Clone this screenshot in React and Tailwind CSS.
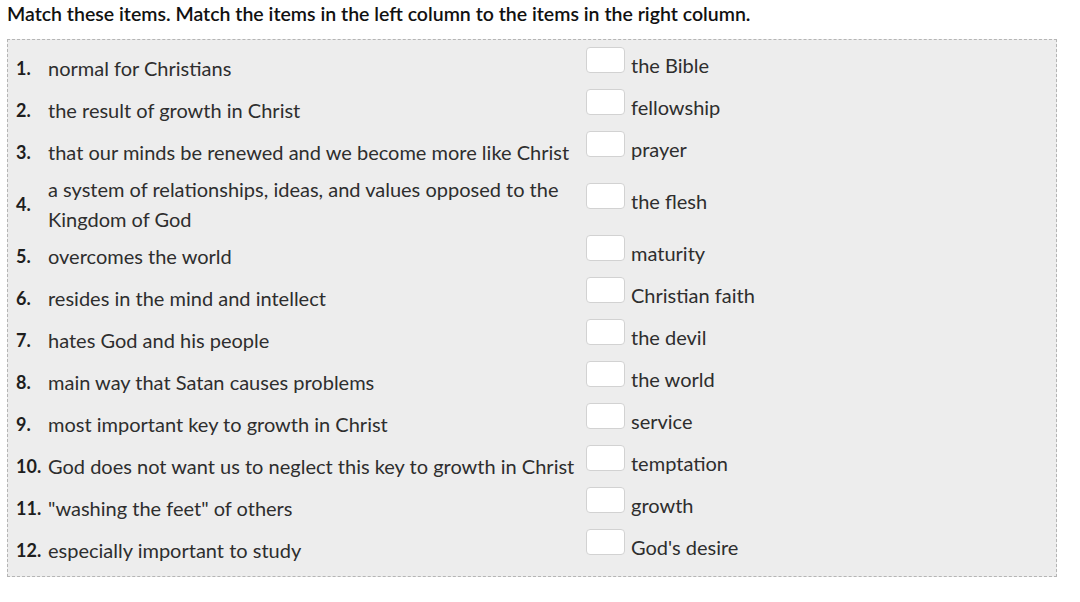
const rows = [
  { n: 1, left: 'normal for Christians', right: 'the Bible' },
  { n: 2, left: 'the result of growth in Christ', right: 'fellowship' },
  { n: 3, left: 'that our minds be renewed and we become more like Christ', right: 'prayer' },
  { n: 4, left: 'a system of relationships, ideas, and values opposed to the Kingdom of God', right: 'the flesh' },
  { n: 5, left: 'overcomes the world', right: 'maturity' },
  { n: 6, left: 'resides in the mind and intellect', right: 'Christian faith' },
  { n: 7, left: 'hates God and his people', right: 'the devil' },
  { n: 8, left: 'main way that Satan causes problems', right: 'the world' },
  { n: 9, left: 'most important key to growth in Christ', right: 'service' },
  { n: 10, left: 'God does not want us to neglect this key to growth in Christ', right: 'temptation' },
  { n: 11, left: '"washing the feet" of others', right: 'growth' },
  { n: 12, left: 'especially important to study', right: "God's desire" },
]

export default function App() {
  return (
    <div className="w-[1080px] h-[602px] bg-white font-['Lato',sans-serif] text-[#2e2e2e]">
      <h1 className="pl-[7px] pt-[2px] text-[19.5px] leading-[23px] font-semibold text-[#111]">
        Match these items. Match the items in the left column to the items in the right column.
      </h1>

      <div className="ml-[7px] mt-[14px] w-[1050px] border border-dashed border-[#b5b5b5] bg-[#ededed] pl-[8px] pt-[7px] pb-[5px]">
        {rows.map((r) => (
          <div key={r.n} className="flex items-center">
            <div className="w-[32px] shrink-0 text-[18px] font-bold text-[#1e1e1e]">{r.n}.</div>
            <div className="w-[532px] shrink-0 py-[1px] text-[20px] leading-[30px]">{r.left}</div>
            <div className="ml-[6px] h-[42px] pb-[14px] text-[20px] leading-[28px]">
              <span className="inline-block mr-[6px] h-[26px] w-[39px] rounded-[4px] border border-[#d2d2d2] bg-white align-baseline" />
              {r.right}
            </div>
          </div>
        ))}
      </div>
    </div>
  )
}
